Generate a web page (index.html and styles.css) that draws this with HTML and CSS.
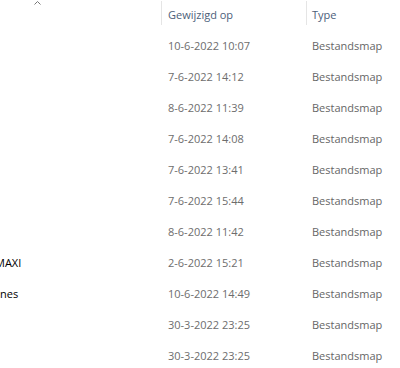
FILE: index.html
```html
<!DOCTYPE html>
<html>
<head>
    <title>Verkenner</title>
    <link rel="stylesheet" href="styles.css">
</head>
<body>
    <div class="list">
        <div class="header">
            <div class="col name-col"><span class="sort-caret"><svg width="7" height="4" viewBox="0 0 7 4"><path d="M0.5 3.5 L3.5 0.5 L6.5 3.5" fill="none" stroke="#777" stroke-width="1"/></svg></span></div>
            <div class="col date-col head-cell">Gewijzigd op</div>
            <div class="col type-col head-cell">Type</div>
        </div>
        <div class="row"><div class="col name-col"></div><div class="col date-col">10-6-2022 10:07</div><div class="col type-col">Bestandsmap</div></div>
        <div class="row"><div class="col name-col"></div><div class="col date-col">7-6-2022 14:12</div><div class="col type-col">Bestandsmap</div></div>
        <div class="row"><div class="col name-col"></div><div class="col date-col">8-6-2022 11:39</div><div class="col type-col">Bestandsmap</div></div>
        <div class="row"><div class="col name-col"></div><div class="col date-col">7-6-2022 14:08</div><div class="col type-col">Bestandsmap</div></div>
        <div class="row"><div class="col name-col"></div><div class="col date-col">7-6-2022 13:41</div><div class="col type-col">Bestandsmap</div></div>
        <div class="row"><div class="col name-col"></div><div class="col date-col">7-6-2022 15:44</div><div class="col type-col">Bestandsmap</div></div>
        <div class="row"><div class="col name-col"></div><div class="col date-col">8-6-2022 11:42</div><div class="col type-col">Bestandsmap</div></div>
        <div class="row"><div class="col name-col"><span class="name-text maxi">MAXI</span></div><div class="col date-col">2-6-2022 15:21</div><div class="col type-col">Bestandsmap</div></div>
        <div class="row"><div class="col name-col"><span class="name-text">nes</span></div><div class="col date-col">10-6-2022 14:49</div><div class="col type-col">Bestandsmap</div></div>
        <div class="row"><div class="col name-col"></div><div class="col date-col">30-3-2022 23:25</div><div class="col type-col">Bestandsmap</div></div>
        <div class="row"><div class="col name-col"></div><div class="col date-col">30-3-2022 23:25</div><div class="col type-col">Bestandsmap</div></div>
    </div>
</body>
</html>
```

FILE: styles.css
```css
body {
    margin: 0;
    background-color: white;
    font-family: "Open Sans", "Noto Sans", sans-serif;
    font-size: 11px;
}
.list {
    width: 400px;
}
.header {
    display: flex;
    height: 30px;
}
.row {
    display: flex;
    height: 31px;
    align-items: center;
}
.col {
    white-space: nowrap;
    overflow: hidden;
}
.name-col {
    width: 161px;
}
.date-col {
    width: 145px;
    padding-left: 7px;
    box-sizing: border-box;
    color: #6d6d6d;
}
.type-col {
    flex: 1;
    padding-left: 6px;
    color: #666;
}
.header .col {
    height: 30px;
}
.head-cell {
    color: #4c607a;
    border-left: 1px solid #e5e5e5;
    height: 24px !important;
    margin-top: 1px;
    padding-top: 6px;
    box-sizing: border-box;
}
.header .date-col {
    padding-left: 6px;
}
.header .type-col {
    padding-left: 5px;
}
.sort-caret {
    display: block;
    padding-left: 34px;
    padding-top: 1px;
    line-height: 0;
}
.name-text {
    display: inline-block;
    color: #000;
}
.maxi {
    margin-left: -5px;
}
```
